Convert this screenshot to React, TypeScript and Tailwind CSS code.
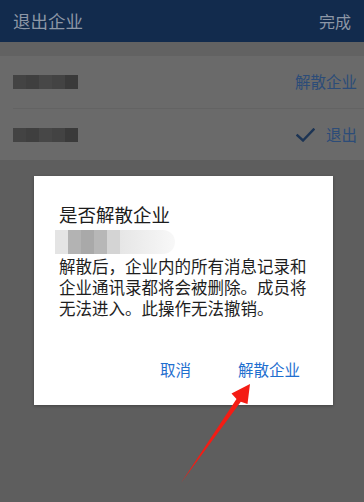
import React from "react"

const font = { fontFamily: '"Noto Sans CJK SC", "Noto Sans", sans-serif' }

function Smudge({ dark }: { dark?: boolean }) {
  // pixelated blur that hides a name in the screenshot
  const cells = dark
    ? ["bg-[#434343]", "bg-[#3f3f3f]", "bg-[#474747]", "bg-[#434343]", "bg-[#3a3a3a]"]
    : ["bg-[#e4e4e4]", "bg-[#b3b3b3]", "bg-[#a9a9a9]", "bg-[#b7b7b7]", "bg-[#d4d4d4]"]
  return (
    <div className="flex h-full">
      {cells.map((c, i) => (
        <div key={i} className={`h-full w-[13px] ${c}`} />
      ))}
    </div>
  )
}

function Check() {
  return (
    <svg width="19" height="14" viewBox="0 0 19 14" fill="none">
      <path d="M1.5 7.5 L7 12.5 L17.5 1.5" stroke="#1c3454" strokeWidth="2.4" strokeLinecap="square" />
    </svg>
  )
}

export default function App() {
  return (
    <div className="relative w-[364px] h-[502px] overflow-hidden bg-[#5e5e5e]" style={font}>
      {/* top bar (dimmed) */}
      <div className="flex h-[42px] items-center justify-between bg-[#122b4d] px-[13px]">
        <span className="text-[17.5px] text-[#8d97a6]">退出企业</span>
        <span className="text-[16px] text-[#8d97a6]">完成</span>
      </div>

      <div className="h-[14px] bg-[#626262]" />

      {/* list */}
      <div className="bg-[#6a6a6a] pl-[13px]">
        <div className="flex h-[53px] items-center justify-between pr-[7px] border-b border-[#636363]">
          <div className="h-[14px]">
            <Smudge dark />
          </div>
          <span className="text-[15.5px] text-[#2c4c78]">解散企业</span>
        </div>
        <div className="flex h-[51px] items-center justify-between pr-[7px]">
          <div className="h-[14px]">
            <Smudge dark />
          </div>
          <div className="flex items-center gap-[11px]">
            <Check />
            <span className="text-[15.5px] text-[#2c4c78]">退出</span>
          </div>
        </div>
      </div>

      {/* dialog */}
      <div className="absolute left-[34px] top-[176px] flex h-[229px] w-[299px] flex-col bg-white shadow-[0_1px_3px_rgba(0,0,0,0.3)]">
        <div className="px-[25px] pt-[26px]">
          <div className="text-[18.5px] leading-[24px] text-[#1c1c1c]">是否解散企业</div>
          <div className="mt-[4px] flex h-[24px] w-[120px] -ml-[4px]">
            <Smudge />
            <div className="h-full w-[55px] rounded-r-full bg-gradient-to-r from-[#e6e6e6] to-[#f8f8f8]" />
          </div>
          <p className="mt-[2px] text-[16.5px] leading-[21px] text-[#1e1e1e]">
            解散后，企业内的所有消息记录和企业通讯录都将会被删除。成员将无法进入。此操作无法撤销。
          </p>
        </div>
        <div className="mt-auto mb-[24px] flex items-center justify-end gap-[47px] pr-[33px] text-[15.5px] text-[#1f6fcf]">
          <span>取消</span>
          <span>解散企业</span>
        </div>
      </div>

      {/* red annotation arrow */}
      <svg className="absolute left-0 top-0" width="364" height="502" viewBox="0 0 364 502">
        <polygon
          points="181,483 236.5,399 231.5,393.5 250,384 247.5,404 240.8,401.8"
          fill="#f41c14"
        />
      </svg>
    </div>
  )
}
